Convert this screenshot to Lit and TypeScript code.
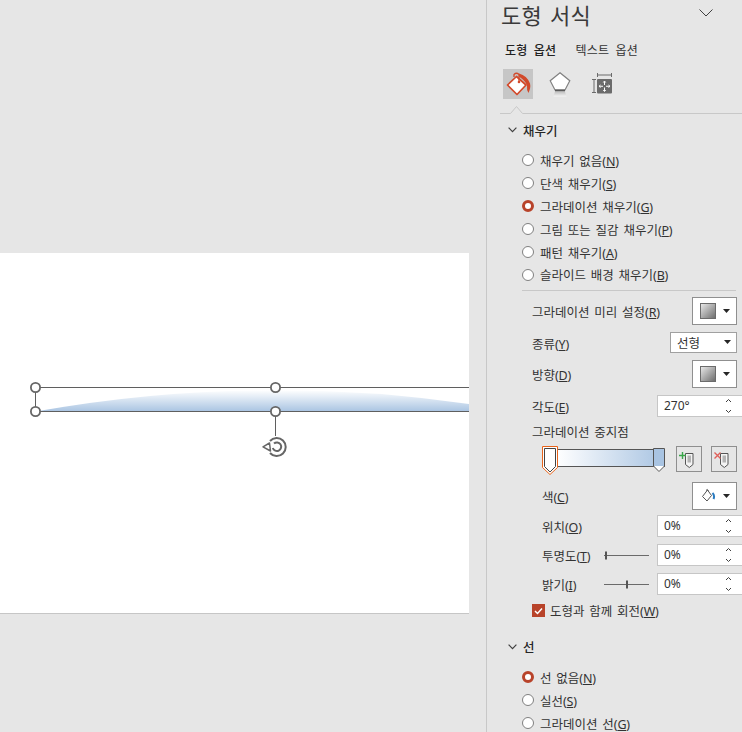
import { LitElement, html, css, svg } from "lit";
import { customElement } from "lit/decorators.js";

const label = (t: string, k: string) => html`${t}<span class="mn">(<u>${k}</u>)</span>`;
const caret = html`<svg class="caret" width="7" height="4" viewBox="0 0 7 4"><path d="M0 0h7L3.500 4z" fill="#262626"/></svg>`;
const swatch = html`<svg width="16" height="16" viewBox="0 0 16 16"><defs><linearGradient id="sw" x1="0" y1="0" x2="1" y2="1"><stop offset="0" stop-color="#ececec"/><stop offset="1" stop-color="#6a6a6a"/></linearGradient></defs><rect x=".5" y=".5" width="15" height="15" fill="url(#sw)" stroke="#6b6b6b"/></svg>`;
const spin = html`<span class="spin"><svg width="7" height="18" viewBox="0 0 7 18"><path d="M1 5l2.500-2.500L6 5M1 13l2.500 2.500L6 13" fill="none" stroke="#404040" stroke-width="1"/></svg></span>`;
const chev = html`<svg class="chev" width="9" height="6" viewBox="0 0 9 6"><path d="M.6.7L4.500 4.600 8.400.7" fill="none" stroke="#404040" stroke-width="1.200"/></svg>`;

const stopDoc = (mark: unknown) => html`<svg width="26" height="26" viewBox="0 0 26 26">
  <path d="M9.500 7.500h7.500v11l-3.700 3-3.800-3z" fill="#f4f4f4" stroke="#555"/>
  <rect x="11.500" y="9.500" width="3.500" height="7" fill="#b4b4b4"/>
  ${mark}
</svg>`;

@customElement("app-root")
export class AppRoot extends LitElement {
  static styles = css`
    :host { display: block; width: 742px; height: 732px; overflow: hidden; background: #e6e6e6;
      font-family: "Noto Sans CJK KR", "Noto Sans", sans-serif; font-size: 12.5px; color: #333; word-spacing: 2px; }
    .root { display: flex; height: 732px; }
    .canvas { width: 486px; flex: none; padding-top: 253px; box-sizing: border-box; }
    .slide { position: relative; width: 469px; height: 361px; background: #fff; border-bottom: 1px solid #c6c6c6; box-sizing: border-box; overflow: hidden; }
    .slide svg { position: absolute; left: 0; top: 0; }
    .panel { width: 256px; flex: none; border-left: 1px solid #c8c8c8; box-sizing: border-box; height: 732px; overflow: hidden; }
    .head { display: flex; justify-content: space-between; align-items: flex-start; height: 33px; padding: 0 29px 0 14px; }
    .head svg { margin-top: 9px; }
    .title { font-size: 22px; line-height: 29px; letter-spacing: .2px; word-spacing: 3px; color: #3a3a3a; }
    .tabs { display: flex; gap: 19px; height: 32px; padding: 0 0 0 18px; align-items: center; font-size: 12px; letter-spacing: .3px; word-spacing: 3px; }
    .tabs b { font-weight: 500; color: #222; }
    .icons { display: flex; gap: 12px; padding-left: 16px; height: 30px; margin-top: 4px; }
    .ic { width: 30px; height: 30px; display: flex; align-items: center; justify-content: center; }
    .ic.on { background: #c6c6c6; }
    .rule { display: block; margin: 0 0 0 13px; }
    .section { display: flex; align-items: center; gap: 6px; height: 20px; padding-left: 21px; font-weight: 500; color: #262626; }
    .sec1 { margin-top: 6px; }
    .radios { padding-left: 35px; }
    .r1 { margin-top: 9px; }
    .r2 { margin-top: 9px; }
    .radio { display: flex; align-items: center; gap: 6px; height: 22.900px; white-space: nowrap; }
    .dot { flex: none; border-radius: 50%; border: 1px solid #808080; background: #fff; box-sizing: content-box; width: 10px; height: 10px; }
    .dot.on { width: 6px; height: 6px; border: 3px solid #b8432a; }
    .sep { height: 1px; background: #c8c8c8; margin: 3.600px 6px 0 35px; }
    .row { display: flex; align-items: center; justify-content: space-between; padding: 0 5px 0 45px; white-space: nowrap; }
    .row.in { padding-left: 55px; }
    .row > span:first-child { margin-top: 2px; }
    .h28 { height: 28px; } .h21 { height: 21px; } .h22 { height: 22px; }
    .mt3 { margin-top: 3px; } .mt5 { margin-top: 5px; } .mt6 { margin-top: 6px; } .mt7 { margin-top: 7px; }
    .mn { font-family: "Noto Sans", sans-serif; font-size: 12.500px; letter-spacing: -.2px; }
    .btn { width: 45px; height: 28px; box-sizing: border-box; border: 1px solid #8f8f8f; background: #fff; display: flex; align-items: center; justify-content: center; gap: 7px; }
    .select { width: 67px; height: 21px; box-sizing: border-box; border: 1px solid #a0a0a0; background: #fff; display: flex; align-items: center; justify-content: space-between; padding: 0 5px 0 6px; }
    .input { width: 86px; margin-right: -6px; height: 22px; box-sizing: border-box; border: 1px solid #c6c6c6; background: #fff; display: flex; align-items: center; justify-content: space-between; padding: 0 10px 0 6px; font: 12px "Noto Sans", sans-serif; }
    .spin { display: flex; }
    .grp { display: flex; align-items: center; }
    .grp .lb { width: 62px; }
    .stops { display: flex; align-items: center; height: 32px; padding: 0 4px 0 55px; margin-top: 1px; }
    .stops .bar { flex: none; }
    .stops .adds { display: flex; gap: 9px; margin-left: 10px; }
    .sq { width: 26px; height: 26px; box-sizing: border-box; border: 1px solid #8f8f8f; display: block; }
    .sq svg { display: block; margin: -1px; }
    .check { display: flex; align-items: center; gap: 5px; padding-left: 45px; height: 20px; margin-top: 6px; white-space: nowrap; }
    .box { width: 13px; height: 13px; background: #b8432a; display: flex; align-items: center; justify-content: center; flex: none; }
    .sec2 { margin-top: 16px; }
    u { text-decoration: underline; text-underline-offset: 1px; }
  `;

  radioRow(t: string, k: string, on = false) {
    return html`<div class="radio"><span class="dot ${on ? "on" : ""}"></span><span>${label(t, k)}</span></div>`;
  }

  slider(x: number) {
    return html`<svg width="46" height="12" viewBox="0 0 46 12"><path d="M0 5.500h45" stroke="#6a6a6a" stroke-width="1"/><rect x="${x}" y="1.500" width="2" height="8" fill="#555"/></svg>`;
  }

  render() {
    return html`<div class="root">
      <div class="canvas">
        <div class="slide">
          <svg width="469" height="360" viewBox="0 0 469 360">
            <defs><linearGradient id="fill" x1="0" y1="0" x2="0" y2="1"><stop offset="0" stop-color="#fff"/><stop offset="1" stop-color="#a9c4e2"/></linearGradient></defs>
            <path d="M35.500 158.500Q275 115.500 515 158.500z" fill="url(#fill)"/>
            <path d="M35.500 134.500H469M35.500 158.500H469M35.500 134.500V158.500M275.500 158.500V183" fill="none" stroke="#5f5f5f" stroke-width="1"/>
            ${[[35.5, 134.5], [275.5, 134.5], [35.5, 158.5], [275.5, 158.5]].map(([x, y]) => svg`<circle cx="${x}" cy="${y}" r="4.600" fill="#fff" stroke="#666" stroke-width="1.800"/>`)}
            <g fill="none" stroke="#666" stroke-width="2">
              <path d="M270 188A9 9 0 1 1 270 200"/>
              <path d="M274 190.500A4.300 4.300 0 1 1 272.800 195"/>
            </g>
            <path d="M263 193.800L269.500 190 270.500 198z" fill="#fff" stroke="#666" stroke-width="1.500" stroke-linejoin="round"/>
          </svg>
        </div>
      </div>
      <div class="panel">
        <div class="head"><span class="title">도형 서식</span>
          <svg width="14" height="8" viewBox="0 0 14 8"><path d="M.5.5L7 7l6.500-6.500" fill="none" stroke="#404040" stroke-width="1"/></svg>
        </div>
        <div class="tabs"><b>도형 옵션</b><span>텍스트 옵션</span></div>
        <div class="icons">
          <div class="ic on"><svg width="26" height="26" viewBox="0 0 26 26">
            <path d="M11.500 5.500L2.500 14l9.500 9.500 9-9.500z" fill="#fff" stroke="#d2492a" stroke-width="1.700" stroke-linejoin="round"/>
            <path d="M9 6V3.500q2.500-2.500 5 0v7" fill="none" stroke="#d2492a" stroke-width="1.300"/>
            <circle cx="14" cy="11" r="1.300" fill="#d2492a"/>
            <path d="M14 2.500q8 2 11 10 1 4-1.500 9.500-2-3-1.500-7.500-1-4-8-9z" fill="#d2492a"/>
          </svg></div>
          <div class="ic"><svg width="24" height="28" viewBox="0 0 24 28">
            <defs><linearGradient id="fade" x1="0" y1="0" x2="0" y2="1"><stop offset="0" stop-color="#bdbdbd"/><stop offset="1" stop-color="#f4f4f4"/></linearGradient></defs>
            <path d="M12 2.700L21.800 10.700 17 20H7L2.200 10.700z" fill="#fff" stroke="#808080" stroke-width="1.200"/>
            <path d="M7 20.500h10" stroke="#5a5a5a" stroke-width="2"/>
            <path d="M7 21.500h10l1.500 5H5.500z" fill="url(#fade)"/>
          </svg></div>
          <div class="ic"><svg width="24" height="24" viewBox="0 0 24 24">
            <path d="M7.500 1v4M21.500 1v4M7.500 3h14M2 7.500h4M2 20.500h4M4 7.500v13" fill="none" stroke="#6b6b6b" stroke-width="1"/>
            <rect x="7" y="7" width="15" height="14.500" rx="1" fill="#6b6b6b"/>
            <path d="M14.500 9.500v3.500M14.500 15.500v3.500M9.500 14.250h3.500M16 14.250h3.500M13.300 10.500l1.200-1.500 1.200 1.500M13.300 18l1.200 1.500 1.200-1.500M10.500 13l-1.500 1.250 1.500 1.250M18.500 13l1.500 1.250-1.500 1.250" fill="none" stroke="#fff" stroke-width="1"/>
          </svg></div>
        </div>
        <svg class="rule" width="242" height="15" viewBox="0 0 242 15"><path d="M0 14.500H10.500L16.500 7.500 22.500 14.500H242" fill="none" stroke="#c8c8c8"/></svg>
        <div class="section sec1">${chev}<span>채우기</span></div>
        <div class="radios r1">
          ${this.radioRow("채우기 없음", "N")}
          ${this.radioRow("단색 채우기", "S")}
          ${this.radioRow("그라데이션 채우기", "G", true)}
          ${this.radioRow("그림 또는 질감 채우기", "P")}
          ${this.radioRow("패턴 채우기", "A")}
          ${this.radioRow("슬라이드 배경 채우기", "B")}
        </div>
        <div class="sep"></div>
        <div class="row h28 mt6"><span>${label("그라데이션 미리 설정", "R")}</span><span class="btn">${swatch}${caret}</span></div>
        <div class="row h21 mt7"><span>${label("종류", "Y")}</span><span class="select"><span>선형</span>${caret}</span></div>
        <div class="row h28 mt7"><span>${label("방향", "D")}</span><span class="btn">${swatch}${caret}</span></div>
        <div class="row h22 mt7"><span>${label("각도", "E")}</span><span class="input"><span>270°</span>${spin}</span></div>
        <div class="row h22 mt3"><span>그라데이션 중지점</span></div>
        <div class="stops">
          <svg class="bar" width="124" height="32" viewBox="0 0 124 32">
            <defs><linearGradient id="bar"><stop offset="0" stop-color="#fff"/><stop offset="1" stop-color="#a9c4e2"/></linearGradient></defs>
            <rect x="14.500" y="6.500" width="108" height="17" fill="url(#bar)" stroke="#555"/>
            <path d="M.5 3.500h15v21l-7.500 7-7.500-7z" fill="#fff" stroke="#e8641b" stroke-width="1"/>
            <path d="M2.500 5.500h11v18L8 29l-5.500-5.500z" fill="#fff" stroke="#444"/>
            <path d="M111.500 5.500h11v17.500L117 28.500 111.500 23z" fill="#fff" stroke="#555"/>
            <rect x="112" y="6" width="10" height="17" fill="#a9c4e2"/>
          </svg>
          <div class="adds">
            <span class="sq">${stopDoc(svg`<path d="M3 9.500h7M6.500 6v7" stroke="#3aa64a" stroke-width="1.400"/>`)}</span>
            <span class="sq">${stopDoc(svg`<path d="M3.500 6.500l6 6M9.500 6.500l-6 6" stroke="#e0605a" stroke-width="1.400"/>`)}</span>
          </div>
        </div>
        <div class="row in h28 mt7"><span>${label("색", "C")}</span><span class="btn"><svg width="16" height="16" viewBox="0 0 16 16"><path d="M7.500 2L2.500 8.500 7 13l4.500-5.500z" fill="#fff" stroke="#555"/><path d="M6 2.500q1-2 2.500 0" fill="none" stroke="#555"/><path d="M12.500 5q2.500 2.500 1 6" fill="none" stroke="#2a7bc0" stroke-width="2"/></svg>${caret}</span></div>
        <div class="row in h22 mt5"><span>${label("위치", "O")}</span><span class="input"><span>0%</span>${spin}</span></div>
        <div class="row in h22 mt7"><span class="grp"><span class="lb">${label("투명도", "T")}</span>${this.slider(1)}</span><span class="input"><span>0%</span>${spin}</span></div>
        <div class="row in h22 mt7"><span class="grp"><span class="lb">${label("밝기", "I")}</span>${this.slider(22)}</span><span class="input"><span>0%</span>${spin}</span></div>
        <div class="check"><span class="box"><svg width="9" height="8" viewBox="0 0 9 8"><path d="M1 4l2.500 2.500L8 1.500" fill="none" stroke="#fff" stroke-width="1.500"/></svg></span><span>${label("도형과 함께 회전", "W")}</span></div>
        <div class="section sec2">${chev}<span>선</span></div>
        <div class="radios r2">
          ${this.radioRow("선 없음", "N", true)}
          ${this.radioRow("실선", "S")}
          ${this.radioRow("그라데이션 선", "G")}
        </div>
      </div>
    </div>`;
  }
}
